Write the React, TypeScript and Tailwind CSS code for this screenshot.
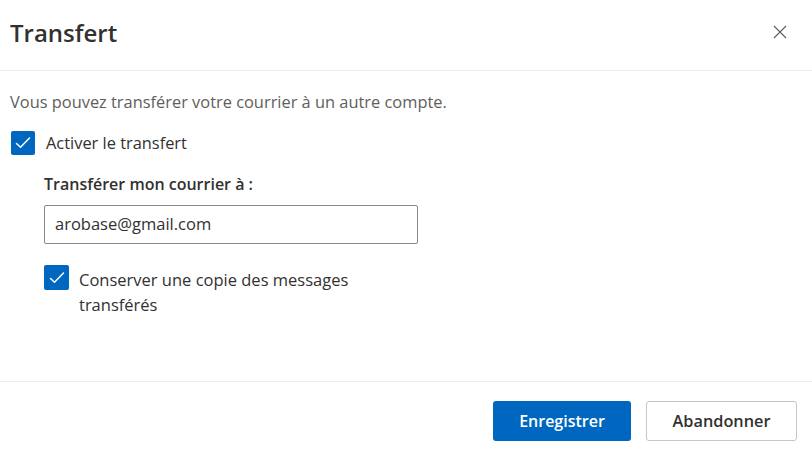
import React from "react";

function Check() {
  return (
    <svg width="24" height="24" viewBox="0 0 24 24" fill="none">
      <path d="M5.5 12.5L9.5 16.2L18.5 7" stroke="white" strokeWidth="1.5" strokeLinecap="round" strokeLinejoin="round" />
    </svg>
  );
}

export default function App() {
  return (
    <div className="w-[812px] h-[473px] bg-white flex flex-col text-[#323130]" style={{ fontFamily: '"Open Sans", "Noto Sans", sans-serif' }}>
      <div className="h-[71px] flex items-center justify-between pl-[10px] pr-[24px] border-b border-[#edebe9] shrink-0">
        <h1 className="text-[24px] font-semibold leading-none -mt-[4px]">Transfert</h1>
        <button className="w-[16px] h-[16px] flex items-center justify-center -mt-[6px]">
          <svg width="16" height="16" viewBox="0 0 16 16" fill="none">
            <path d="M2 2L14 14M14 2L2 14" stroke="#605e5c" strokeWidth="1.1" />
          </svg>
        </button>
      </div>
      <div className="flex-1 flex flex-col pl-[10px] pt-[20px]">
        <p className="text-[16.4px] text-[#605e5c] leading-[22px]">Vous pouvez transférer votre courrier à un autre compte.</p>
        <label className="flex items-center gap-[11px] mt-[18px] ml-[1px]">
          <span className="w-[24px] h-[24px] rounded-[2px] bg-[#0067c0] flex items-center justify-center"><Check /></span>
          <span className="text-[16.4px] leading-[24px]">Activer le transfert</span>
        </label>
        <div className="pl-[34px] flex flex-col">
          <div className="text-[16px] font-semibold leading-[22px] mt-[18px]">Transférer mon courrier à :</div>
          <div className="mt-[10px] w-[374px] h-[39px] border border-[#8a8886] rounded-[2px] flex items-center px-[10px] text-[16.5px]">arobase@gmail.com</div>
          <label className="flex items-start gap-[10px] mt-[21px]">
            <span className="w-[25px] h-[25px] rounded-[2px] bg-[#0067c0] flex items-center justify-center shrink-0"><Check /></span>
            <span className="text-[16.5px] leading-[25px] w-[285px] mt-[2px]">Conserver une copie des messages transférés</span>
          </label>
        </div>
      </div>
      <div className="h-[92px] border-t border-[#edebe9] flex items-start justify-end gap-[15px] pr-[15px] pt-[19px] shrink-0">
        <button className="w-[138px] h-[40px] rounded-[3px] bg-[#0067c0] text-white text-[16px] font-semibold">Enregistrer</button>
        <button className="w-[151px] h-[40px] rounded-[3px] bg-white border border-[#c8c6c4] text-[16.3px] font-semibold">Abandonner</button>
      </div>
    </div>
  );
}
